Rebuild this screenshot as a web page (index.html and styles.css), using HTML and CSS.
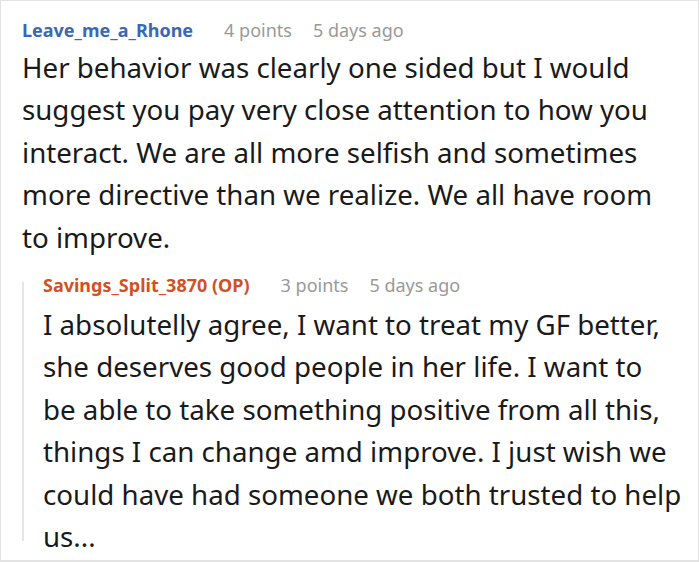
FILE: index.html
```html
<!DOCTYPE html>
<html>
<head>
<meta charset="utf-8">
<link rel="stylesheet" href="styles.css">
</head>
<body>
<div class="card">
  <div class="comment">
    <div class="meta">
      <span class="author">Leave_me_a_Rhone</span>
      <span class="info">4 points</span>
      <span class="info">5 days ago</span>
    </div>
    <p class="body">Her behavior was clearly one sided but I would suggest you pay very close attention to how you interact. We are all more selfish and sometimes more directive than we realize. We all have room to improve.</p>
  </div>
  <div class="reply">
    <div class="thread-line"></div>
    <div class="comment">
      <div class="meta">
        <span class="author op">Savings_Split_3870 (OP)</span>
        <span class="info">3 points</span>
        <span class="info">5 days ago</span>
      </div>
      <p class="body reply-body">I absolutelly agree, I want to treat my GF better, she deserves good people in her life. I want to be&nbsp;able to take something positive from all this, things I can change amd improve. I just wish we could have had someone we both trusted to help us...</p>
    </div>
  </div>
</div>
</body>
</html>
```
FILE: styles.css
```css
html, body {
  margin: 0;
  padding: 0;
  background: #ffffff;
}
.card {
  box-sizing: border-box;
  width: 699px;
  height: 562px;
  border: 1px solid #e3e3e3;
  border-bottom-width: 2px;
  padding: 16px 14px 0 21px;
  font-family: "Noto Sans", sans-serif;
  color: #1a1a1a;
  overflow: hidden;
}
.meta {
  display: flex;
  gap: 21px;
  font-size: 18px;
  line-height: 26px;
  height: 26px;
}
.author {
  font-weight: 700;
  color: #3a68b4;
  margin-right: 10px;
}
.author.op {
  color: #d4501f;
}
.info {
  color: #999999;
}
.body {
  margin: 3px 0 0 0;
  font-size: 27.7px;
  line-height: 42.4px;
}
.reply-body {
  margin-top: 5px;
}
.reply {
  display: grid;
  grid-template-columns: 2px 1fr;
  column-gap: 19px;
  margin-top: 14px;
}
.thread-line {
  background: #e6e6e6;
  margin: 10px 0 16px 0;
}
```
